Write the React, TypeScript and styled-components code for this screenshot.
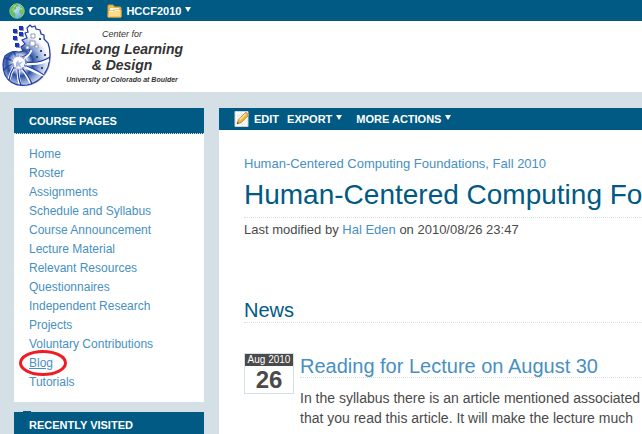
import React from "react";
import styled, { createGlobalStyle } from "styled-components";

const navy = "#005a84";
const sky = "#4790c1";
const mist = "#d5e0e6";
const ink = "#4a4a4a";

const GlobalStyle = createGlobalStyle`
  * { box-sizing: border-box; }
  html, body { margin: 0; overflow: hidden; }
  body { background: ${mist}; color: ${ink}; font: 13px/19px "Liberation Sans", Arial, sans-serif; }
  h1, h2, h3, p, ul { margin: 0; padding: 0; font-weight: normal; }
  ul { list-style: none; }
`;

const Page = styled.div`
  height: 100vh;
  overflow: hidden;
`;

const TopBar = styled.nav`
  display: flex;
  align-items: center;
  gap: 14px;
  height: 21px;
  padding-left: 9px;
  background: ${navy};
`;

const BarButton = styled.button`
  display: flex;
  align-items: center;
  gap: 4px;
  padding: 0;
  border: 0;
  background: none;
  color: #fff;
  font: bold 11px/20px "Liberation Sans", Arial, sans-serif;
  white-space: nowrap;
  cursor: pointer;
`;

const Caret = styled.svg`
  width: 6px;
  height: 5px;
  margin-bottom: 3px;
  fill: #fff;
`;

const Header = styled.header`
  display: flex;
  height: 71px;
  padding-left: 2px;
  background: #fff;
`;

const Brand = styled.div`
  display: flex;
  flex-direction: column;
  align-items: center;
  width: 140px;
  padding-top: 6px;
  color: #333;
  font-style: italic;
  white-space: nowrap;
`;

const BrandLine = styled.div<{ $size: number; $line: number; $bold?: boolean }>`
  font-size: ${(p) => p.$size}px;
  line-height: ${(p) => p.$line}px;
  font-weight: ${(p) => (p.$bold ? "bold" : "normal")};
`;

const Columns = styled.div`
  display: grid;
  grid-template-columns: 190px minmax(0, 1fr);
  gap: 15px;
  padding: 16px 0 0 14px;
`;

const Sidebar = styled.aside`
  display: flex;
  flex-direction: column;
`;

const Panel = styled.section`
  background: #fff;
`;

const PanelTitle = styled.h2`
  height: 26px;
  padding-left: 15px;
  border-bottom: 1px dotted ${mist};
  background: ${navy};
  color: #fff;
  font-size: 11px;
  font-weight: bold;
  line-height: 26px;
`;

const PageList = styled.ul`
  padding: 11px 15px 10px;
`;

const PageItem = styled.li`
  height: 19px;
  font-size: 12px;
`;

const Link = styled.a<{ $current?: boolean }>`
  position: relative;
  color: ${sky};
  text-decoration: ${(p) => (p.$current ? "underline" : "none")};
`;

const Ring = styled.svg`
  position: absolute;
  left: -12px;
  top: -7px;
  width: 50px;
  height: 28px;
  fill: none;
  stroke: #ee1c25;
  stroke-width: 3;
  pointer-events: none;
`;

const Tab = styled.div`
  width: 8px;
  height: 1px;
  margin: 9px 0 0 9px;
  background: ${navy};
`;

const Main = styled.main`
  min-height: 340px;
  background: #fff;
`;

const Toolbar = styled.div`
  display: flex;
  align-items: center;
  gap: 14px;
  height: 22px;
  padding-left: 15px;
  background: ${navy};
`;

const ToolGroup = styled.div`
  display: flex;
  gap: 8px;
`;

const Article = styled.article`
  padding: 24px 0 0 25px;
  white-space: nowrap;
  overflow: hidden;
`;

const Crumb = styled.div`
  font-size: 13px;
`;

const Title = styled.h1`
  height: 45px;
  border-bottom: 1px dotted ${mist};
  color: ${navy};
  font-size: 28px;
  line-height: 44px;
`;

const Modified = styled.p`
  font-size: 13px;
  line-height: 24px;
`;

const Section = styled.h2`
  height: 29px;
  margin: 52px 0 30px;
  border-bottom: 1px dotted ${mist};
  color: ${navy};
  font-size: 20px;
  line-height: 32px;
`;

const Entry = styled.section`
  display: flex;
  align-items: flex-start;
  gap: 6px;
`;

const DateBox = styled.time`
  flex: none;
  width: 50px;
  height: 41px;
  border: 1px solid ${mist};
  text-align: center;
`;

const Month = styled.div`
  height: 12px;
  background: ${ink};
  color: #fff;
  font-size: 10px;
  line-height: 12px;
`;

const Day = styled.div`
  font-size: 24px;
  font-weight: bold;
  line-height: 28px;
`;

const EntryBody = styled.div`
  flex: 1;
  min-width: 0;
`;

const EntryTitle = styled.h3`
  height: 25px;
  margin-bottom: 10px;
  border-bottom: 1px dotted ${mist};
  font-size: 20px;
  line-height: 26px;
`;

const Copy = styled.p`
  font-size: 14px;
  line-height: 20px;
`;

const Down = () => (
  <Caret viewBox="0 0 6 5" aria-hidden="true">
    <path d="M0 0h6L3 5z" />
  </Caret>
);

const Globe = () => (
  <svg width="16" height="16" viewBox="0 0 16 16" aria-hidden="true">
    <defs>
      <radialGradient id="sea" cx=".4" cy=".35" r=".7">
        <stop offset="0" stopColor="#c4e8f5" />
        <stop offset="1" stopColor="#62a8d8" />
      </radialGradient>
    </defs>
    <circle cx="8" cy="8" r="7.2" fill="url(#sea)" stroke="#8fcf8d" strokeWidth="1" />
    <path d="M2 4Q5 0 9 1.4L10 3 7 4 7.5 6 5 7 4 9 6 10 6.5 12 6 14.5Q1 12 1 8z" fill="#6cbb5d" />
    <path d="M11 2Q15 4 14.8 9L13 12 11 11 10 8 12 6z" fill="#78bf58" />
    <path d="M4 4l3-1.5M3 7l2-1.5M12 5l1 2" stroke="#c1e592" fill="none" />
  </svg>
);

const Folder = () => (
  <svg width="15" height="14" viewBox="0 0 15 14" aria-hidden="true">
    <path d="M1 13V2q0-1 1-1h4l1.5 2H13q1 0 1 1v9z" fill="#eebd54" stroke="#d99d38" />
    <path d="M3 4h9v3H3z" fill="#fff7d7" />
    <path d="M1 13l.5-6H6l1-1h7v7z" fill="#fbdd8b" stroke="#e5b04d" />
    <path d="M2 7.5h5l1-1h5" stroke="#fff2c2" fill="none" />
  </svg>
);

const Pencil = () => (
  <svg width="16" height="17" viewBox="0 0 16 17" aria-hidden="true">
    <path d="M1 .5h13v15H1z" fill="#fff" stroke="#cfd2d3" />
    <path d="M3 4h6M3 6h5M3 8h3M3 13h8" stroke="#dbe1e4" />
    <path d="M3 12.8l1.4-4L11.7 1.3l3 2.8-7.3 7.3z" fill="#f1bd39" stroke="#a5712b" strokeWidth=".8" />
    <path d="M5.5 8.8L12 2.4" stroke="#ffe697" strokeWidth="1.2" />
    <path d="M11 2l3 2.8 1-1-2.8-3z" fill="#e29a80" />
    <path d="M3 12.8l.6-1.8 1.2 1.2z" fill="#333" />
  </svg>
);

const outline =
  "M25 7L28 4 30 6 33 5 34 8 38 9 39 13 42 14 42 18 46 22Q50 33 46 46Q40 61 25 64Q9 66 3 54Q-1 43 3 35Q9 29 17 31L21 30 19 26 23 23 20 19 25 17 23 12 26 11z";

const Shell = () => (
  <svg width="50" height="71" viewBox="0 0 50 71" role="img" aria-label="Nautilus shell">
    <defs>
      <radialGradient id="nacre" gradientUnits="userSpaceOnUse" cx="18" cy="42" r="34">
        <stop offset="0" stopColor="#fff" />
        <stop offset=".2" stopColor="#f2f5fc" />
        <stop offset=".38" stopColor="#274f9e" />
        <stop offset=".6" stopColor="#9cb2dc" />
        <stop offset=".85" stopColor="#fafcff" />
      </radialGradient>
    </defs>
    <path d={outline} fill="#999" transform="translate(1 1)" opacity=".6" />
    <path d={outline} fill="url(#nacre)" stroke="#2439ad" strokeWidth="1.2" />
    <g fill="none" stroke="#fff" strokeWidth="3">
      <path d="M24 42Q36 44 47 39M22 45Q33 51 42 54M20 47Q26 56 29 62M16 48Q16 57 18 63M12 46Q9 51 7 58M22 37Q27 34 29 29" />
    </g>
    <g fill="none" stroke="#263ca8" strokeWidth="1.3">
      <path d="M23 41Q37 43 48 36M22 44Q35 49 42 54M20 47Q27 55 30 63M16 48Q16 57 19 64M12 46Q8 52 7 59M11 43Q5 45 2 49M11 40Q7 38 3 37M14 36L12 31M20 36Q27 34 28 28" />
      <path d="M11 44Q8 37 14 35Q21 34 24 40Q25 47 17 49Q12 48 11 44" stroke="#8c9dd0" strokeWidth="2" strokeDasharray="2 1" />
    </g>
    <circle cx="17" cy="42" r="5" fill="#fff" />
    <path d="M14 42l2-3 1 3 4-2-3 4 2 3-4-2-2 2z" fill="#aab9dc" />
    <g fill="#fff" stroke="#7d87a2" strokeWidth=".8">
      <path d="M29 13h4v4h-4zM28 20h5v5h-5zM24 25h3v3h-3zM33 24h3v3h-3z" />
    </g>
    <path d="M37 17h2v2h-2zM38 29h2v2h-2zM42 33h2v2h-2zM34 35h2v2h-2zM39 46h2v2h-2z" fill="#3c4664" />
    <g fill="#999">
      <path d="M18 6h4v4h-4zM12 9h4v4h-4zM18 12h4v4h-4zM12 16h4v4h-4zM14 23h4v4h-4z" />
    </g>
    <g fill="#1731d0">
      <path d="M17 5h4v4h-4zM11 8h4v4h-4zM17 11h4v4h-4zM11 15h4v4h-4zM13 22h4v4h-4z" />
    </g>
  </svg>
);

const pages = [
  "Home",
  "Roster",
  "Assignments",
  "Schedule and Syllabus",
  "Course Announcement",
  "Lecture Material",
  "Relevant Resources",
  "Questionnaires",
  "Independent Research",
  "Projects",
  "Voluntary Contributions",
  "Blog",
  "Tutorials",
];

export default function App() {
  return (
    <Page>
      <GlobalStyle />
      <TopBar>
        <BarButton><Globe />COURSES<Down /></BarButton>
        <BarButton><Folder />HCCF2010<Down /></BarButton>
      </TopBar>
      <Header>
        <Shell />
        <Brand>
          <BrandLine $size={9} $line={14}>Center for</BrandLine>
          <BrandLine $size={14} $line={16} $bold>LifeLong Learning</BrandLine>
          <BrandLine $size={14} $line={17} $bold>&amp; Design</BrandLine>
          <BrandLine $size={7} $line={12} $bold>University of Colorado at Boulder</BrandLine>
        </Brand>
      </Header>
      <Columns>
        <Sidebar>
          <Panel>
            <PanelTitle>COURSE PAGES</PanelTitle>
            <PageList>
              {pages.map((name) => (
                <PageItem key={name}>
                  <Link href="#" $current={name === "Blog"}>
                    {name}
                    {name === "Blog" && (
                      <Ring viewBox="0 0 50 28" aria-hidden="true">
                        <ellipse cx="26" cy="14" rx="22.5" ry="11.5" />
                      </Ring>
                    )}
                  </Link>
                </PageItem>
              ))}
            </PageList>
          </Panel>
          <Tab />
          <Panel>
            <PanelTitle>RECENTLY VISITED</PanelTitle>
          </Panel>
        </Sidebar>
        <Main>
          <Toolbar>
            <ToolGroup>
              <BarButton><Pencil />EDIT</BarButton>
              <BarButton>EXPORT<Down /></BarButton>
            </ToolGroup>
            <BarButton>MORE ACTIONS<Down /></BarButton>
          </Toolbar>
          <Article>
            <Crumb><Link href="#">Human-Centered Computing Foundations, Fall 2010</Link></Crumb>
            <Title>Human-Centered Computing Fo</Title>
            <Modified>Last modified by <Link href="#">Hal Eden</Link> on 2010/08/26 23:47</Modified>
            <Section>News</Section>
            <Entry>
              <DateBox dateTime="2010-08-26">
                <Month>Aug 2010</Month>
                <Day>26</Day>
              </DateBox>
              <EntryBody>
                <EntryTitle><Link href="#">Reading for Lecture on August 30</Link></EntryTitle>
                <Copy>
                  In the syllabus there is an article mentioned associated
                  <br />
                  that you read this article. It will make the lecture much
                </Copy>
              </EntryBody>
            </Entry>
          </Article>
        </Main>
      </Columns>
    </Page>
  );
}
